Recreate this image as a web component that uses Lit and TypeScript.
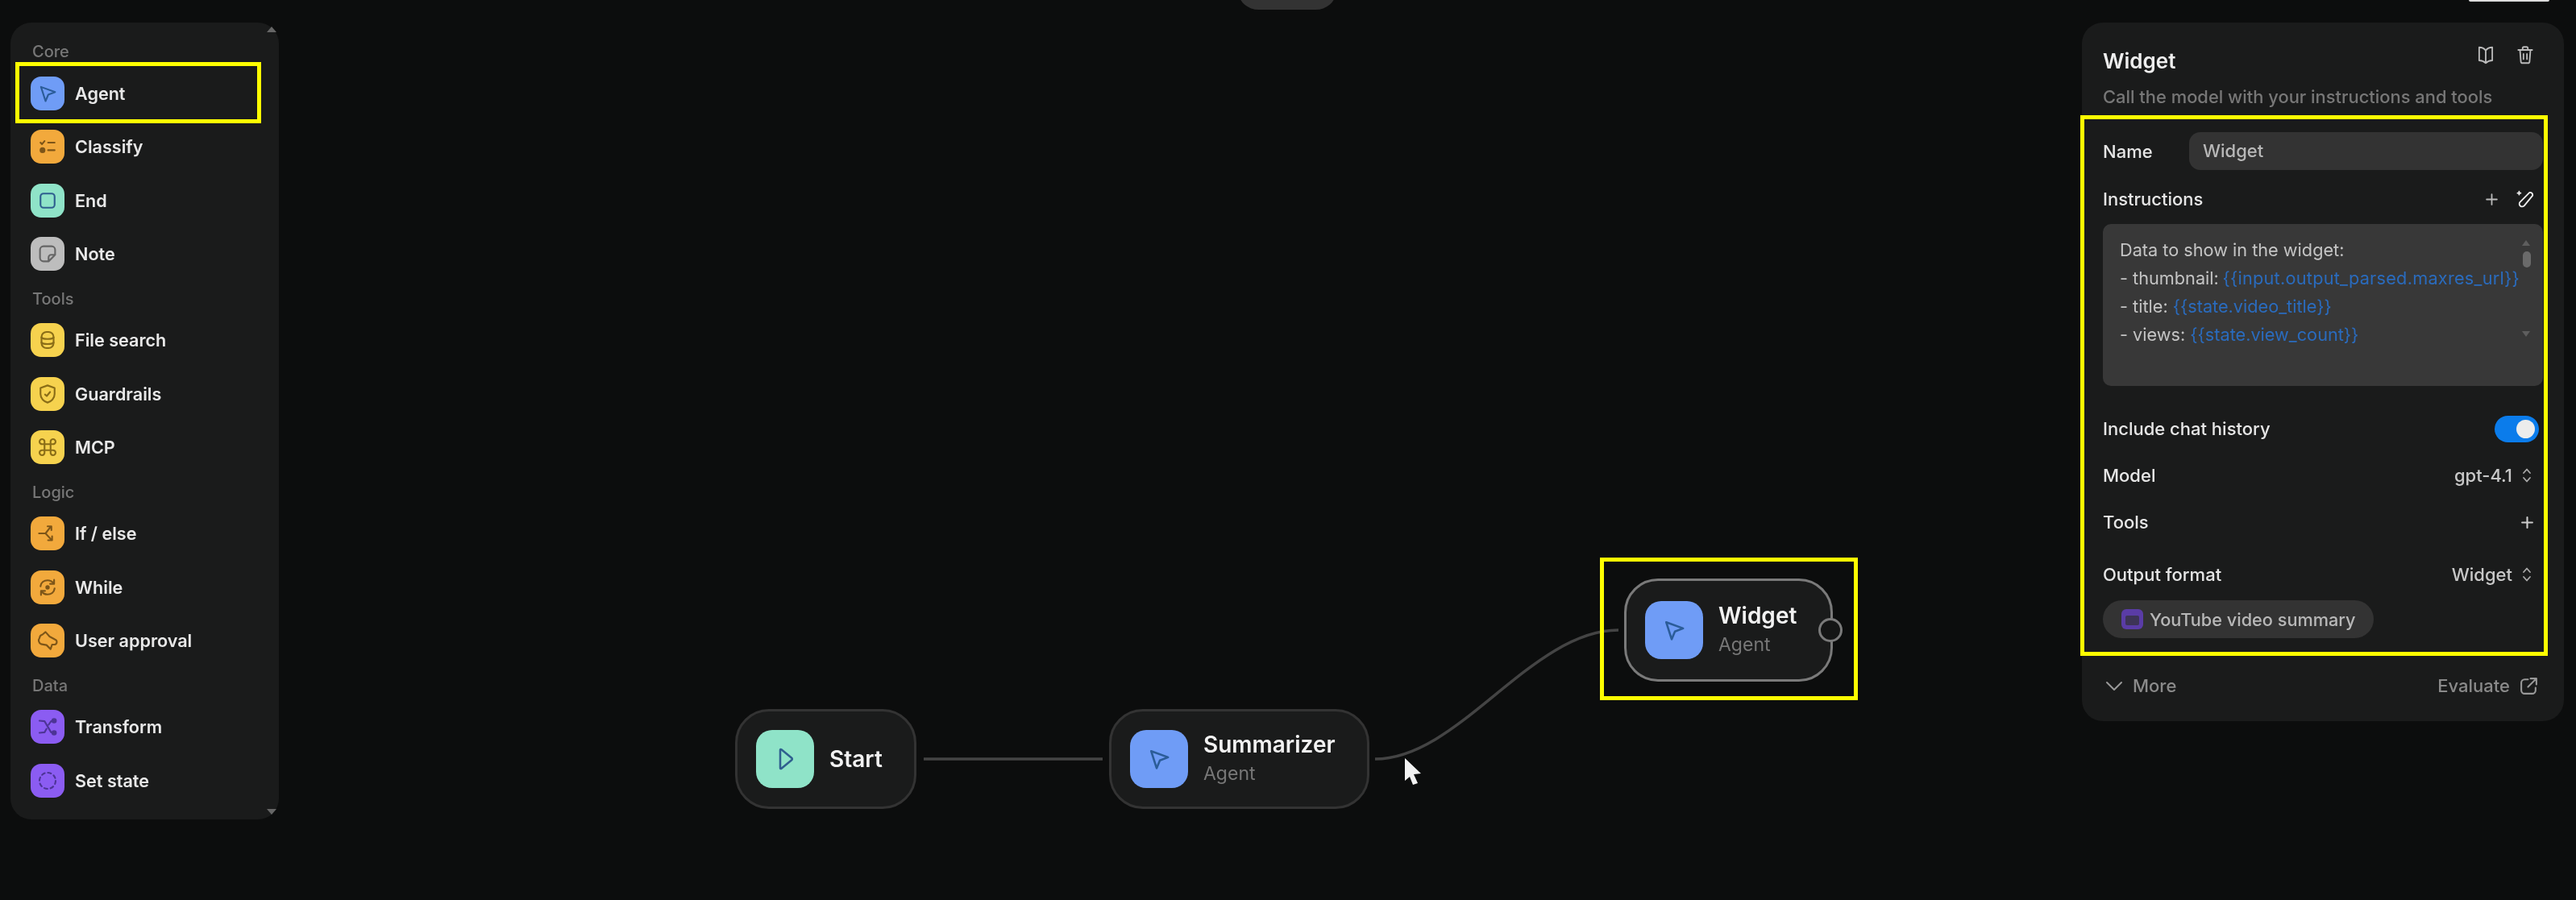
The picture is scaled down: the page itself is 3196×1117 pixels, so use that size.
import { css, html, LitElement, svg } from "lit";
import { customElement } from "lit/decorators.js";

type Tone = "blue" | "orange" | "teal" | "gray" | "yellow" | "purple";

const glyphs: Record<string, unknown> = {
  agent: svg`<path d="M5.5 5.5 L19.5 10.6 L12.7 13.2 L10 19.6 Z"/>`,
  play: svg`<path d="M8 4.5 C8 4 8.5 3.8 9 4.2 L17.5 11.2 C18 11.6 18 12.4 17.5 12.8 L9 19.8 C8.5 20.2 8 20 8 19.5 Z"/>`,
  classify: svg`<path d="M5 8 L6.5 9.5 L9 6.5 M12.5 8 H19 M12.5 15.5 H19"/><circle cx="7" cy="15.5" r="2" fill="currentColor"/>`,
  end: svg`<rect x="5" y="5" width="14" height="14" rx="3"/>`,
  note: svg`<path d="M8 4.5 H16 A3.5 3.5 0 0 1 19.5 8 V13 L13 19.5 H8 A3.5 3.5 0 0 1 4.5 16 V8 A3.5 3.5 0 0 1 8 4.5 Z M13 19.5 V15.5 A2.5 2.5 0 0 1 15.5 13 H19.5"/>`,
  database: svg`<rect x="6" y="4" width="12" height="16" rx="5"/><path d="M6 9.5 C8 11.5 16 11.5 18 9.5 M6 14.5 C8 16.5 16 16.5 18 14.5"/>`,
  shield: svg`<path d="M12 3.5 L19 6 V12 C19 16.5 15.5 19.5 12 20.5 C8.5 19.5 5 16.5 5 12 V6 Z"/><path d="M9.5 12.5 L11.2 14 L14.5 10" />`,
  mcp: svg`<path d="M9 9 H15 V15 H9 Z M9 9 H7 A2.5 2.5 0 1 1 9 7 Z M15 9 V7 A2.5 2.5 0 1 1 17 9 Z M15 15 H17 A2.5 2.5 0 1 1 15 17 Z M9 15 V17 A2.5 2.5 0 1 1 7 15 Z"/>`,
  branch: svg`<path d="M3.5 12 H10 L15 5.5 M10 12 L16 18.5 M12 5 H15.8 V8.8 M16.5 14.8 V18.8 H12.5"/>`,
  loop: svg`<path d="M5 11 C5.5 7 8.5 5 12 5 C14.5 5 16.5 6 18 8 M19 13 C18.5 17 15.5 19 12 19 C9.5 19 7.5 18 6 16 M18.5 4.5 V8.5 H14.5 M5.5 19.5 V15.5 H9.5"/><circle cx="12" cy="12" r="1.3" fill="currentColor"/>`,
  approval: svg`<path d="M10 3.5 L14 8 L19.5 11 A2.6 2.6 0 0 1 19 16 L16.5 16 L15 20.5 L11 16.5 L5.5 15.5 A4 4 0 0 1 4 9.5 A4 4 0 0 1 7 6 Z"/>`,
  shuffle: svg`<path d="M4 6 L9 6.5 L15.5 17.5 L20 18 M4 18 L9 17.5 L11 14 M13 10 L15.5 6.5 L20 6"/><circle cx="18.5" cy="6" r="1.8" fill="currentColor"/><circle cx="18.5" cy="18" r="1.8" fill="currentColor"/>`,
  state: svg`<circle cx="12" cy="12" r="8" stroke-dasharray="3.2 3.1"/>`,
};

const sections: { title: string; items: [string, string, Tone][] }[] = [
  { title: "Core", items: [["Agent", "agent", "blue"], ["Classify", "classify", "orange"], ["End", "end", "teal"], ["Note", "note", "gray"]] },
  { title: "Tools", items: [["File search", "database", "yellow"], ["Guardrails", "shield", "yellow"], ["MCP", "mcp", "yellow"]] },
  { title: "Logic", items: [["If / else", "branch", "orange"], ["While", "loop", "orange"], ["User approval", "approval", "orange"]] },
  { title: "Data", items: [["Transform", "shuffle", "purple"], ["Set state", "state", "purple"]] },
];

const nodes = [
  { title: "Start", sub: "", icon: "play", tone: "teal", x: 912, y: 880, w: 225, h: 124, selected: false },
  { title: "Summarizer", sub: "Agent", icon: "agent", tone: "blue", x: 1376, y: 880, w: 323, h: 124, selected: false },
  { title: "Widget", sub: "Agent", icon: "agent", tone: "blue", x: 2015, y: 718, w: 259, h: 128, selected: true },
];

// yellow annotation boxes drawn over the recording
const marks = [
  { x: 19, y: 77, w: 305, h: 76 },
  { x: 1985, y: 692, w: 320, h: 177 },
  { x: 2581, y: 143, w: 580, h: 671 },
];

const icon = (name: string) => html`<svg class="glyph" viewBox="0 0 24 24">${glyphs[name]}</svg>`;

const updown = html`<svg class="updown" viewBox="0 0 14 24"><path d="M3 9 L7 4.5 L11 9 M3 15 L7 19.5 L11 15"/></svg>`;
const plus = html`<svg class="plus" viewBox="0 0 16 16"><path d="M8 2 V14 M2 8 H14"/></svg>`;

@customElement("app-root")
export class AppRoot extends LitElement {
  static styles = css`
    :host {
      display: block;
      position: relative;
      width: 3196px;
      height: 1117px;
      overflow: hidden;
      background: #0c0d0d;
      font-family: Inter, "Liberation Sans", sans-serif;
      color: #ececec;
    }

    .soft { filter: blur(0.7px); }

    .top-pill {
      position: absolute;
      left: 1537px;
      top: -30px;
      width: 120px;
      height: 42px;
      background: #333;
      border-radius: 40px / 34px;
    }
    .top-edge {
      position: absolute;
      left: 3063px;
      top: 0;
      width: 100px;
      height: 2px;
      background: #ddd;
      border-radius: 0 0 4px 4px;
    }

    .wires { position: absolute; inset: 0; width: 100%; height: 100%; }
    .wires path { fill: none; stroke: #444; stroke-width: 3.5; }
    .wires .cursor { fill: #f2f2f2; stroke: none; }

    .node {
      position: absolute;
      box-sizing: border-box;
      display: flex;
      align-items: center;
      gap: 19px;
      padding-left: 23px;
      background: #1a1b1b;
      border: 3px solid #333;
      border-radius: 42px;
    }
    .node.selected { border-color: #7a7a7a; }
    .node .tile { width: 72px; height: 72px; border-radius: 20px; }
    .node .glyph { width: 36px; height: 36px; }
    .node-title { font-size: 28px; font-weight: 600; line-height: 36px; color: #f2f2f2; }
    .node-sub { font-size: 23px; line-height: 36px; color: #777; }
    .handle {
      position: absolute;
      right: -15px;
      top: 50%;
      width: 24px;
      height: 24px;
      margin-top: -15px;
      border: 3px solid #7a7a7a;
      border-radius: 50%;
      background: #141515;
    }

    .tile {
      flex: none;
      display: flex;
      align-items: center;
      justify-content: center;
      width: 42px;
      height: 42px;
      border-radius: 13px;
    }
    .blue { background: #6f9cf6; color: #2b5c98; }
    .orange { background: #f2a93c; color: #7d5518; }
    .teal { background: #8fe3c8; color: #2f5f8f; }
    .gray { background: #bdbdbd; color: #666; }
    .yellow { background: #f6d24e; color: #8a6d17; }
    .purple { background: #8b5cf2; color: #4d3496; }
    .glyph {
      width: 30px;
      height: 30px;
      fill: none;
      stroke: currentColor;
      stroke-width: 1.7;
      stroke-linecap: round;
      stroke-linejoin: round;
    }

    .sidebar {
      position: absolute;
      left: 13px;
      top: 28px;
      box-sizing: border-box;
      width: 333px;
      height: 989px;
      padding: 14px 0 0 25px;
      background: #1a1b1b;
      border-radius: 26px;
    }
    .section-title {
      height: 40.5px;
      padding: 5px 0 0 2px;
      box-sizing: border-box;
      font-size: 20px;
      line-height: 34.5px;
      font-weight: 500;
      color: #777;
    }
    .item {
      display: flex;
      align-items: center;
      gap: 13px;
      height: 66.5px;
      font-size: 21.6px;
      font-weight: 600;
      color: #e8e8e8;
    }
    .arrow {
      position: absolute;
      right: 3px;
      width: 0;
      height: 0;
      border-left: 6px solid transparent;
      border-right: 6px solid transparent;
    }
    .arrow.up { top: 5px; border-bottom: 7px solid #666; }
    .arrow.down { bottom: 6px; border-top: 7px solid #666; }

    .panel {
      position: absolute;
      left: 2583px;
      top: 28px;
      box-sizing: border-box;
      width: 598px;
      height: 867px;
      padding: 28px 26px 0;
      background: #1a1b1b;
      border-radius: 26px;
      font-size: 22px;
    }
    .row {
      display: flex;
      align-items: center;
      justify-content: space-between;
      height: 36px;
      padding-right: 11px;
      font-weight: 500;
      color: #e6e6e6;
    }
    .panel-title { height: 38px; font-size: 26px; font-weight: 600; color: #eee; }
    .panel-icons { display: flex; gap: 23px; margin: -14px -2px 0 0; }
    .panel-icons svg, .tool-icons svg {
      width: 26px;
      height: 26px;
      fill: none;
      stroke: #bbb;
      stroke-width: 1.7;
      stroke-linecap: round;
      stroke-linejoin: round;
    }
    .subtitle { margin-top: 10px; font-size: 21.9px; line-height: 32px; color: #777; font-weight: 500; }

    .name-row { display: flex; align-items: center; margin-top: 28px; font-weight: 500; color: #e6e6e6; }
    .name-row label { width: 107px; }
    .name-input {
      flex: 1;
      height: 47px;
      padding-left: 17px;
      line-height: 47px;
      background: #333;
      border-radius: 14px;
      color: #b8b8b8;
    }
    .instructions { margin-top: 18px; }
    .tool-icons { display: flex; align-items: center; gap: 20px; margin-right: -2px; color: #ddd; }
    .tool-icons .plus { width: 17px; height: 17px; }
    .tool-icons .wand { stroke: #eee; }
    .plus { width: 17px; height: 17px; fill: none; stroke: #ccc; stroke-width: 2; stroke-linecap: round; }

    .prompt {
      position: relative;
      box-sizing: border-box;
      height: 201px;
      margin-top: 13px;
      padding: 14.5px 21px;
      background: #383838;
      border-radius: 10px;
      font-size: 21.7px;
      line-height: 35px;
      color: #c4c4c4;
    }
    .prompt span { color: #2a6bbd; }
    .prompt span.long { letter-spacing: 0.25px; margin-left: -1.5px; }
    .scroll-up, .scroll-down {
      position: absolute;
      right: 16px;
      width: 0;
      height: 0;
      border-left: 5px solid transparent;
      border-right: 5px solid transparent;
    }
    .scroll-up { top: 20px; border-bottom: 7px solid #5e5e5e; }
    .scroll-down { top: 133px; border-top: 7px solid #5e5e5e; }
    .scroll-thumb {
      position: absolute;
      right: 15px;
      top: 34px;
      width: 10px;
      height: 20px;
      border-radius: 5px;
      background: #6a6a6a;
    }

    .toggle {
      position: relative;
      box-sizing: border-box;
      width: 55px;
      height: 33px;
      margin-right: -6px;
      border-radius: 17px;
      background: #0b7ceb;
    }
    .toggle::after {
      content: "";
      position: absolute;
      right: 5px;
      top: 5px;
      width: 23px;
      height: 23px;
      border-radius: 50%;
      background: #ececec;
    }
    .include { margin-top: 35px; }
    .model { margin-top: 22px; }
    .tools { margin-top: 22px; }
    .output { margin-top: 29px; }
    .value { display: flex; align-items: center; gap: 11px; margin-right: 2px; color: #c8c8c8; }
    .updown { width: 14px; height: 24px; fill: none; stroke: #aaa; stroke-width: 1.8; stroke-linecap: round; stroke-linejoin: round; }
    .chip {
      display: inline-flex;
      align-items: center;
      gap: 8px;
      height: 47px;
      margin-top: 14px;
      padding: 0 22px 0 23px;
      background: #333;
      border-radius: 24px;
      color: #b8b8b8;
      font-size: 21.7px;
      font-weight: 500;
    }
    .chip-icon { width: 27px; height: 25px; border-radius: 6px; background: #5a3ca6; position: relative; }
    .chip-icon::after {
      content: "";
      position: absolute;
      inset: 8px 5px 5px;
      border-radius: 2px;
      background: #3d3456;
    }
    .footer {
      display: flex;
      align-items: center;
      justify-content: space-between;
      height: 36px;
      margin-top: 41px;
      padding-right: 5px;
      color: #8a8a8a;
      font-weight: 500;
    }
    .footer div { display: flex; align-items: center; }
    .footer svg { fill: none; stroke: #999; stroke-width: 2; stroke-linecap: round; stroke-linejoin: round; }
    .more svg { width: 22px; height: 14px; margin: 0 12px 0 3px; }
    .evaluate svg { width: 25px; height: 25px; margin-left: 11px; }

    .mark {
      position: absolute;
      box-sizing: border-box;
      border: 5px solid #ffff00;
      pointer-events: none;
    }
  `;

  private renderNode(n: (typeof nodes)[number]) {
    return html`
      <div
        class="node soft ${n.selected ? "selected" : ""}"
        style="left:${n.x}px;top:${n.y}px;width:${n.w}px;height:${n.h}px"
      >
        <div class="tile ${n.tone}">${icon(n.icon)}</div>
        <div>
          <div class="node-title">${n.title}</div>
          ${n.sub ? html`<div class="node-sub">${n.sub}</div>` : null}
        </div>
        ${n.selected ? html`<div class="handle"></div>` : null}
      </div>
    `;
  }

  render() {
    return html`
      <div class="top-pill"></div>
      <div class="top-edge"></div>

      <svg class="wires soft" viewBox="0 0 3196 1117">
        <path d="M1146 942 H1368" />
        <path d="M1706 942 C1810 942 1900 782 2008 782" />
        <path
          class="cursor"
          d="M1743 941 L1763 960 L1754 961 L1759 972 L1753 974 L1749 964 L1743 969 Z"
        />
      </svg>

      ${nodes.map((n) => this.renderNode(n))}

      <aside class="sidebar soft">
        <i class="arrow up"></i>
        ${sections.map(
          (s) => html`
            <div class="section-title">${s.title}</div>
            ${s.items.map(
              ([label, glyph, tone]) => html`
                <div class="item">
                  <div class="tile ${tone}">${icon(glyph)}</div>
                  ${label}
                </div>
              `,
            )}
          `,
        )}
        <i class="arrow down"></i>
      </aside>

      <section class="panel soft">
        <div class="row panel-title">
          Widget
          <div class="panel-icons">
            <svg viewBox="0 0 24 24">
              <path d="M12 7 C10 4.5 7.5 3.5 4.5 3.5 V18.5 C7.5 18.5 10 19.5 12 21.5 C14 19.5 16.5 18.5 19.5 18.5 V3.5 C16.5 3.5 14 4.5 12 7 Z M12 7 V21.5" />
            </svg>
            <svg viewBox="0 0 24 24">
              <path d="M4 6.5 H20 M9 6.5 V4.5 A1.5 1.5 0 0 1 10.5 3 H13.5 A1.5 1.5 0 0 1 15 4.5 V6.5 M6 6.5 L7 19.5 A2 2 0 0 0 9 21.5 H15 A2 2 0 0 0 17 19.5 L18 6.5 M10 11 V17 M14 11 V17" />
            </svg>
          </div>
        </div>
        <div class="subtitle">Call the model with your instructions and tools</div>

        <div class="name-row">
          <label>Name</label>
          <div class="name-input">Widget</div>
        </div>

        <div class="row instructions">
          Instructions
          <div class="tool-icons">
            ${plus}
            <svg class="wand" viewBox="0 0 24 24">
              <path d="M17 4.5 A3 3 0 0 1 20.5 8 L11 19.5 A3.2 3.2 0 0 1 6 15.5 Z M5 3.5 V7 M3.2 5.2 H6.8" />
            </svg>
          </div>
        </div>

        <div class="prompt">
          Data to show in the widget:<br />
          - thumbnail: <span class="long">{{input.output_parsed.maxres_url}}</span><br />
          - title: <span>{{state.video_title}}</span><br />
          - views: <span>{{state.view_count}}</span>
          <i class="scroll-up"></i>
          <i class="scroll-thumb"></i>
          <i class="scroll-down"></i>
        </div>

        <div class="row include">Include chat history <div class="toggle"></div></div>
        <div class="row model">Model <div class="value">gpt-4.1 ${updown}</div></div>
        <div class="row tools">Tools ${plus}</div>
        <div class="row output">Output format <div class="value">Widget ${updown}</div></div>
        <div class="chip"><div class="chip-icon"></div>YouTube video summary</div>

        <div class="footer">
          <div class="more">
            <svg viewBox="0 0 22 14"><path d="M2 3 L11 12 L20 3" /></svg>
            More
          </div>
          <div class="evaluate">
            Evaluate
            <svg viewBox="0 0 24 24">
              <path d="M11 4 H7 A4 4 0 0 0 3 8 V17 A4 4 0 0 0 7 21 H16 A4 4 0 0 0 20 17 V14 M14 3 H21 V10 M21 3 L11 13" />
            </svg>
          </div>
        </div>
      </section>

      ${marks.map(
        (m) => html`<div class="mark" style="left:${m.x}px;top:${m.y}px;width:${m.w}px;height:${m.h}px"></div>`,
      )}
    `;
  }
}

declare global {
  interface HTMLElementTagNameMap {
    "app-root": AppRoot;
  }
}
